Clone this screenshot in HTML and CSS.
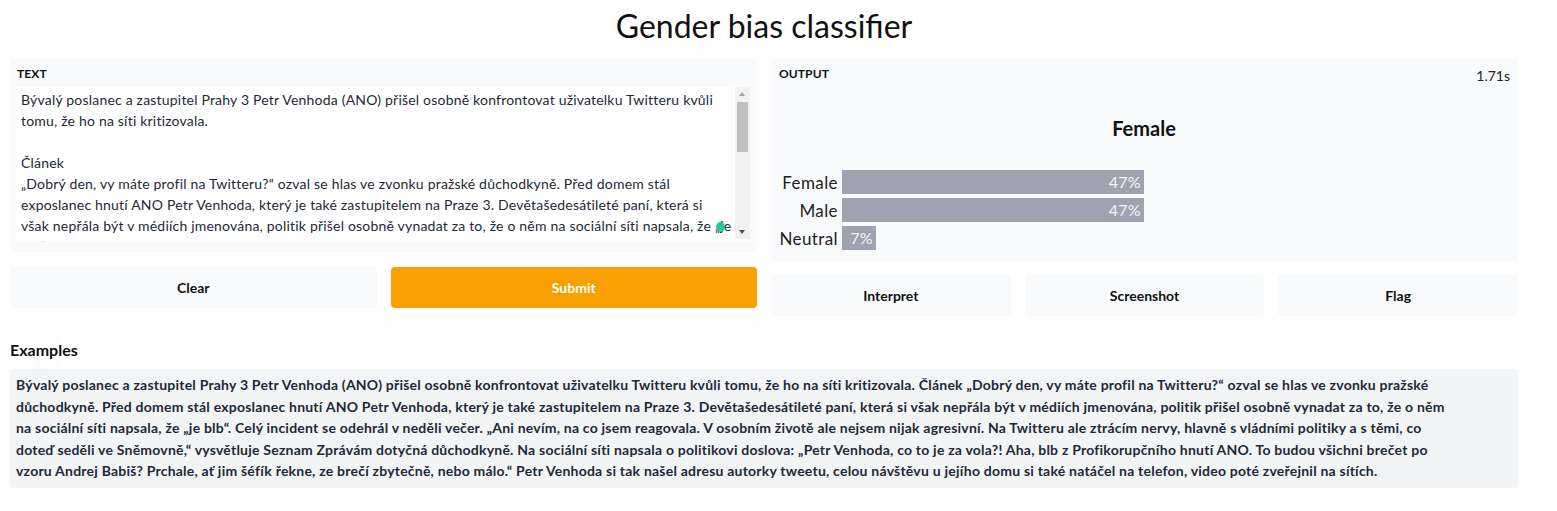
FILE: index.html
```html
<!DOCTYPE html>
<html lang="cs">
<head>
<meta charset="utf-8">
<title>Gender bias classifier</title>
<link rel="stylesheet" href="styles.css">
</head>
<body>
<div class="page">
  <h1 class="title">Gender bias classifier</h1>
  <div class="io-row">
    <div class="col">
      <div class="panel panel-in">
        <div class="label">TEXT</div>
        <div class="textarea">
          <div class="ta-text">
            <div class="ln">Bývalý poslanec a zastupitel Prahy 3 Petr Venhoda (ANO) přišel osobně konfrontovat uživatelku Twitteru kvůli</div>
            <div class="ln">tomu, že ho na síti kritizovala.</div>
            <div class="ln">&nbsp;</div>
            <div class="ln">Článek</div>
            <div class="ln">„Dobrý den, vy máte profil na Twitteru?“ ozval se hlas ve zvonku pražské důchodkyně. Před domem stál</div>
            <div class="ln">exposlanec hnutí ANO Petr Venhoda, který je také zastupitelem na Praze 3. Devětašedesátileté paní, která si</div>
            <div class="ln">však nepřála být v médiích jmenována, politik přišel osobně vynadat za to, že o něm na sociální síti napsala, že „je</div>
            <div class="ln">blb“. Celý incident se odehrál v neděli večer.</div>
          </div>
          <div class="scrollbar">
            <div class="sb-arrow sb-up"></div>
            <div class="sb-track"><div class="sb-thumb"></div></div>
            <div class="sb-arrow sb-down"></div>
          </div>
          <span class="cursor-dot"></span>
        </div>
      </div>
      <div class="btn-row btn-row-2">
        <button class="btn">Clear</button>
        <button class="btn btn-primary">Submit</button>
      </div>
    </div>
    <div class="col">
      <div class="panel panel-out">
        <div class="out-head">
          <div class="label">OUTPUT</div>
          <div class="timing">1.71s</div>
        </div>
        <div class="out-class">Female</div>
        <div class="conf">
          <div class="conf-row">
            <div class="conf-label">Female</div>
            <div class="conf-bar" style="width:302px">47%</div>
          </div>
          <div class="conf-row">
            <div class="conf-label">Male</div>
            <div class="conf-bar" style="width:302px">47%</div>
          </div>
          <div class="conf-row">
            <div class="conf-label">Neutral</div>
            <div class="conf-bar" style="width:34px">7%</div>
          </div>
        </div>
      </div>
      <div class="btn-row btn-row-3">
        <button class="btn">Interpret</button>
        <button class="btn">Screenshot</button>
        <button class="btn">Flag</button>
      </div>
    </div>
  </div>
  <h2 class="ex-title">Examples</h2>
  <div class="examples">
    <div class="ln">Bývalý poslanec a zastupitel Prahy 3 Petr Venhoda (ANO) přišel osobně konfrontovat uživatelku Twitteru kvůli tomu, že ho na síti kritizovala. Článek „Dobrý den, vy máte profil na Twitteru?“ ozval se hlas ve zvonku pražské</div>
    <div class="ln">důchodkyně. Před domem stál exposlanec hnutí ANO Petr Venhoda, který je také zastupitelem na Praze 3. Devětašedesátileté paní, která si však nepřála být v médiích jmenována, politik přišel osobně vynadat za to, že o něm</div>
    <div class="ln">na sociální síti napsala, že „je blb“. Celý incident se odehrál v neděli večer. „Ani nevím, na co jsem reagovala. V osobním životě ale nejsem nijak agresivní. Na Twitteru ale ztrácím nervy, hlavně s vládními politiky a s těmi, co</div>
    <div class="ln">doteď seděli ve Sněmovně,“ vysvětluje Seznam Zprávám dotyčná důchodkyně. Na sociální síti napsala o politikovi doslova: „Petr Venhoda, co to je za vola?! Aha, blb z Profikorupčního hnutí ANO. To budou všichni brečet po</div>
    <div class="ln">vzoru Andrej Babiš? Prchale, ať jim šéfík řekne, ze brečí zbytečně, nebo málo.“ Petr Venhoda si tak našel adresu autorky tweetu, celou návštěvu u jejího domu si také natáčel na telefon, video poté zveřejnil na sítích.</div>
  </div>
</div>
</body>
</html>
```
FILE: styles.css
```css
* { box-sizing: border-box; }
html, body { margin: 0; padding: 0; background: #ffffff; }
body {
  font-family: Lato, "Open Sans", "DejaVu Sans", sans-serif;
  color: #111827;
}
.page {
  width: 1508px;
  margin-left: 10px;
}
.title {
  margin: 0;
  height: 59px;
  padding-top: 6px;
  text-align: center;
  font-size: 32px;
  font-weight: 400;
  line-height: 40px;
  color: #111;
}
.io-row {
  display: grid;
  grid-template-columns: 747px 747px;
  column-gap: 14px;
}
.col { display: flex; flex-direction: column; }
.panel {
  background: #f9fafb;
  border-radius: 4px;
}
.label {
  font-size: 12px;
  font-weight: 700;
  line-height: 14px;
  color: #111;
  letter-spacing: 0.1px;
}
.panel-in {
  height: 193px;
  padding: 8px 7px 10px 6px;
  display: flex;
  flex-direction: column;
}
.panel-in .label { padding-left: 1px; margin-bottom: 6px; }
.textarea {
  position: relative;
  flex: 1;
  background: #fff;
  display: flex;
  overflow: hidden;
}
.ta-text {
  flex: 1;
  padding: 2px 0 0 5px;
  font-size: 14px;
  line-height: 21px;
  letter-spacing: 0.2px;
  color: #1f2937;
  overflow: hidden;
}
.ln { white-space: nowrap; }
.scrollbar {
  width: 15px;
  height: 152px;
  background: #f1f1f1;
  display: flex;
  flex-direction: column;
}
.sb-arrow { height: 15px; position: relative; }
.sb-up::after, .sb-down::after {
  content: "";
  position: absolute;
  left: 4px;
  width: 0; height: 0;
  border-left: 3.5px solid transparent;
  border-right: 3.5px solid transparent;
}
.sb-up::after { top: 5px; border-bottom: 4px solid #a3a3a3; }
.sb-down::after { top: 6px; border-top: 4px solid #505050; }
.sb-track { flex: 1; padding: 0 2px; }
.sb-thumb { height: 50px; background: #c1c1c1; }
.cursor-dot {
  position: absolute;
  left: 700px;
  top: 135px;
  width: 9px;
  height: 10px;
  border-radius: 50%;
  background: #1fcc99;
}
.btn-row {
  display: flex;
  gap: 14px;
}
.btn-row-2 { margin-top: 15px; }
.btn-row-3 { margin-top: 14px; }
.btn {
  flex: 1;
  height: 41px;
  border: 0;
  border-radius: 4px;
  background: #f9fafb;
  font-family: inherit;
  font-size: 14px;
  font-weight: 700;
  color: #111;
  cursor: pointer;
}
.btn-primary { background: #f8a000; color: #fff; }
.panel-out {
  height: 202px;
  padding: 8px 8px 11px 7px;
  display: flex;
  flex-direction: column;
}
.out-head {
  display: flex;
  justify-content: space-between;
  align-items: flex-start;
}
.out-head .label { padding-left: 1px; }
.timing { font-size: 14px; line-height: 16px; color: #222; margin-top: 1px; }
.out-class {
  text-align: center;
  font-size: 20px;
  font-weight: 700;
  line-height: 24px;
  margin-top: 32px;
  color: #111;
}
.conf {
  margin-top: auto;
  display: flex;
  flex-direction: column;
  gap: 4px;
}
.conf-row {
  display: flex;
  align-items: center;
  height: 24px;
}
.conf-label {
  width: 64px;
  text-align: right;
  padding-right: 4px;
  font-size: 17px;
  letter-spacing: 0.4px;
  color: #222;
  white-space: nowrap;
}
.conf-bar {
  height: 24px;
  background: #9fa2b1;
  color: #f4f5f7;
  font-size: 16px;
  line-height: 24px;
  letter-spacing: 0.3px;
  text-align: right;
  padding-right: 3px;
  white-space: nowrap;
}
.ex-title {
  margin: 24px 0 0;
  font-size: 16px;
  font-weight: 700;
  line-height: 20px;
  color: #111;
}
.examples {
  margin-top: 9px;
  background: #f3f4f6;
  border-radius: 4px;
  padding: 5px 6px 7px;
  font-size: 14px;
  font-weight: 700;
  line-height: 21.5px;
  letter-spacing: 0.22px;
  color: #1f2937;
  height: 119px;
}
```
